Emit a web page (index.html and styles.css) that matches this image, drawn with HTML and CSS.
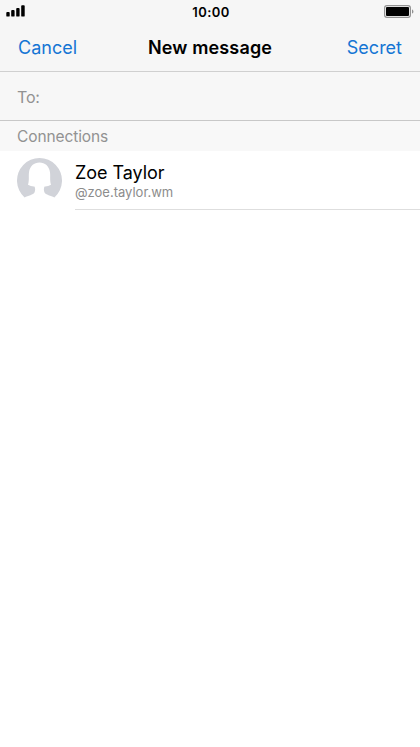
FILE: index.html
```
<!DOCTYPE html>
<html lang="en">
<head>
    <meta charset="UTF-8">
    <meta name="viewport" content="width=device-width, initial-scale=1.0">
    <title>New message</title>
    <link rel="stylesheet" href="styles.css">
</head>
<body>
<div class="status-bar">
    <svg class="signal" width="20" height="12" viewBox="0 0 20 12">
        <rect x="0.3" y="7" width="3.4" height="4.6" rx="0.9"/>
        <rect x="5.2" y="5" width="3.4" height="6.6" rx="0.9"/>
        <rect x="10.2" y="3" width="3.4" height="8.6" rx="0.9"/>
        <rect x="15.2" y="0.2" width="3.5" height="11.4" rx="0.9"/>
    </svg>
    <span class="time">10:00</span>
    <svg class="battery" width="30" height="13" viewBox="0 0 30 13">
        <rect x="0.6" y="0.6" width="25.8" height="11.8" rx="2.4" fill="none" stroke="#929292" stroke-width="1.2"/>
        <rect x="2" y="2" width="23" height="9" rx="1"/>
        <path d="M28 4.4c1.9 0.6 1.9 3.6 0 4.2z" fill="#929292"/>
    </svg>
</div>
<header>
    <a class="cancel">Cancel</a>
    <h1>New message</h1>
    <a class="secret">Secret</a>
</header>
<div class="to"><span>To:</span></div>
<h2><span>Connections</span></h2>
<main>
    <div class="contact">
        <svg class="avatar" width="45" height="45" viewBox="0 0 45 45">
            <path fill="#d1d3d9" d="M7.6 39.4A22.5 22.5 0 1 1 37.4 39.4C34 37.4 28.6 37 27.4 34.2C26.6 32 26.7 30 27.6 28.6Q31 28.8 34 26.8C32.6 22.5 33.5 18.5 33 14.2C32.2 8 28 4.4 22.5 4.4C17 4.4 12.8 8 12 14.2C11.5 18.5 12.4 22.5 11 26.8Q14 28.8 17.4 28.6C18.3 30 18.4 32 17.6 34.2C16.4 37 11 37.4 7.6 39.4z"/>
        </svg>
        <div class="info">
            <div class="name"><span>Zoe Taylor</span></div>
            <div class="username"><span>@zoe.taylor.wm</span></div>
        </div>
    </div>
</main>
</body>
</html>
```

FILE: styles.css
```
body {
    font-family: Inter, "Liberation Sans", sans-serif;
    margin: 0;
    background-color: #fff;
    color: #000;
    height: 747px;
    overflow: hidden;
}

.status-bar {
    display: grid;
    grid-template-columns: 1fr auto 1fr;
    align-items: center;
    height: 23px;
    padding: 0 6px;
    background-color: #f6f6f6;
}

.signal {
    margin-bottom: 1px;
}

.time {
    font-size: 13px;
    font-weight: 600;
    letter-spacing: 0.4px;
    padding-left: 2px;
}

.battery {
    justify-self: end;
}

header {
    display: grid;
    grid-template-columns: 1fr auto 1fr;
    align-items: center;
    box-sizing: border-box;
    height: 49px;
    padding: 0 18px;
    background-color: #f6f6f6;
    border-bottom: 1px solid #d0d0d0;
    font-size: 18px;
}

header a {
    color: #1475d4;
}

header h1 {
    margin: 0;
    font-size: 18px;
    font-weight: 600;
    letter-spacing: 0.15px;
}

.secret {
    text-align: right;
}

.to {
    display: flex;
    align-items: center;
    box-sizing: border-box;
    height: 49px;
    padding: 1px 17px 0;
    background-color: #f7f7f7;
    border-bottom: 1px solid #c8c8c8;
    color: #929292;
    font-size: 16px;
    letter-spacing: -0.2px;
}

h2 {
    display: flex;
    align-items: center;
    height: 30px;
    margin: 0;
    padding: 0 17px;
    background-color: #f8f8f8;
    color: #929292;
    font-size: 15.5px;
    font-weight: 400;
    letter-spacing: -0.1px;
}

.contact {
    display: flex;
    padding-left: 17px;
}

.avatar {
    margin-top: 7px;
}

.info {
    flex: 1;
    box-sizing: border-box;
    height: 59px;
    margin-left: 13px;
    padding-top: 11px;
    border-bottom: 1px solid #dedede;
}

.name {
    font-size: 18px;
    line-height: 22px;
    letter-spacing: -0.05px;
}

.username {
    color: #8c8c8c;
    font-size: 13px;
    line-height: 16px;
}
```
